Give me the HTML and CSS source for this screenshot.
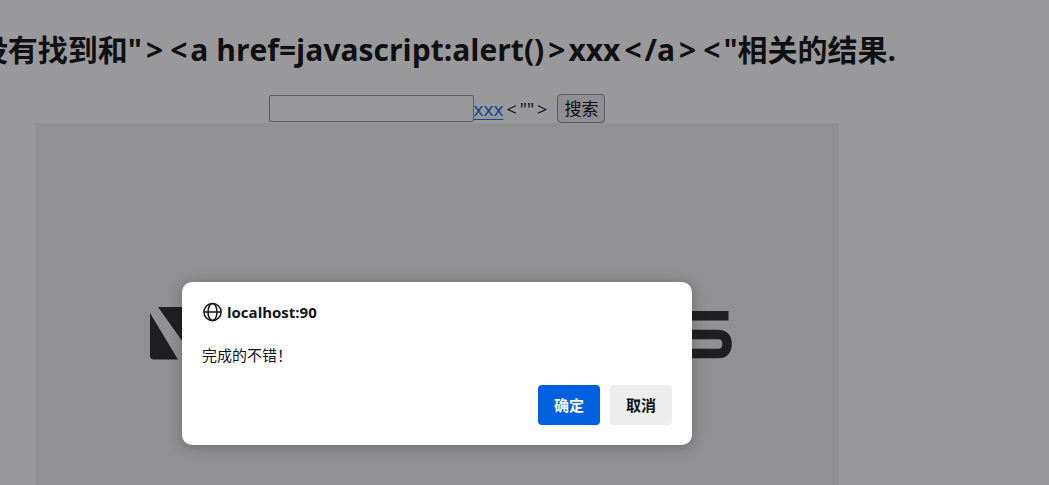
FILE: index.html
```html
<!DOCTYPE html>
<html lang="zh-CN">
<head>
<meta charset="utf-8">
<title>localhost:90</title>
<link rel="stylesheet" href="styles.css">
</head>
<body>
<main class="page">
  <h1 class="title">没有找到和"<span class="angle">&gt;</span><span class="angle">&lt;</span>a href=javascript:alert()<span class="angle">&gt;</span>xxx<span class="angle">&lt;</span>/a<span class="angle">&gt;</span><span class="angle">&lt;</span>"相关的结果.</h1>
  <form class="search">
    <input class="keyword" type="text" aria-label="关键词"><a class="link" href="#">xxx</a><span class="rest"><span class="angle">&lt;</span>""<span class="angle">&gt;</span></span>
    <button class="submit" type="button">搜索</button>
  </form>
  <div class="banner">
    <svg class="logo" viewBox="0 0 584 56" width="584" height="56" aria-hidden="true">
      <path d="M8 2H60V54H45Z M0 8L28 54.500H4Q0 54.500 0 50.500Z"/>
      <path d="M520 6H578.500V15.500H520Z"/>
      <path class="stroke" d="M520 29.500H568Q577 29.500 577 39T568 48.500H520"/>
    </svg>
  </div>
  <div class="dialog" role="dialog" aria-labelledby="origin">
    <div class="origin">
      <svg class="globe" viewBox="0 0 20 20" width="20" height="20" aria-hidden="true">
        <circle cx="10.500" cy="10" r="8.600"/>
        <ellipse cx="10.500" cy="10" rx="4.500" ry="8.600"/>
        <path d="M2 10H19"/>
      </svg>
      <strong id="origin">localhost:90</strong>
    </div>
    <p class="message">完成的不错！</p>
    <div class="actions">
      <button class="action primary" type="button">确定</button>
      <button class="action" type="button">取消</button>
    </div>
  </div>
</main>
</body>
</html>
```
FILE: styles.css
```css
* {
  box-sizing: border-box;
}

body {
  margin: 0;
  min-height: 100vh;
  overflow: hidden;
  background: #99999b;
  color: #101013;
  font-family: "Open Sans", "Noto Sans CJK SC", sans-serif;
}

.page {
  position: relative;
  display: flex;
  flex-direction: column;
  align-items: center;
  min-height: 100vh;
  margin-right: 175px;
  padding-top: 30px;
}

.title {
  margin: 0 0 24px;
  font-size: 30px;
  line-height: 40px;
  white-space: nowrap;
}

.title .angle {
  padding: 0 3px 0 4px;
}

.search {
  display: flex;
  align-items: center;
  height: 29px;
  font-size: 18px;
  line-height: 28px;
}

.keyword {
  width: 205px;
  height: 27px;
  padding: 2px;
  border: 1px solid #5b5a66;
  border-radius: 2px;
  background: #99999b;
  font: inherit;
}

.link {
  color: #0b488c;
  font-size: 19px;
  text-underline-offset: 3px;
}

.rest {
  margin-right: 7px;
}

.rest .angle {
  padding: 0 3px;
}

.submit {
  height: 29px;
  padding: 0 6px;
  border: 1px solid #5b5a66;
  border-radius: 4px;
  background: #8e8e93;
  color: inherit;
  font: inherit;
  font-size: 17px;
}

.banner {
  display: flex;
  flex: 1;
  justify-content: center;
  align-self: stretch;
  margin: 0 35px;
  padding-top: 182px;
  background: #919193;
}

.logo {
  flex: none;
  margin-left: 10px;
  fill: #1f1f21;
}

.logo .stroke {
  fill: none;
  stroke: #1f1f21;
  stroke-width: 9.5px;
}

.dialog {
  position: absolute;
  top: 282px;
  left: 50%;
  width: 510px;
  padding: 20px;
  border-radius: 10px;
  background: #fff;
  box-shadow: 0 2px 14px rgba(20, 20, 26, 0.3);
  color: #15141a;
  font-size: 15px;
  line-height: 20px;
  transform: translateX(-50%);
}

.origin {
  display: flex;
  align-items: center;
  gap: 5px;
}

.globe {
  fill: none;
  stroke: #15141a;
  stroke-width: 1.5px;
}

.message {
  margin: 23px 0 20px;
}

.actions {
  display: flex;
  justify-content: flex-end;
  gap: 10px;
}

.action {
  width: 62px;
  height: 40px;
  padding: 0;
  border: 0;
  border-radius: 4px;
  background: #ededed;
  color: #15141a;
  font: inherit;
  font-weight: 700;
}

.primary {
  background: #0061e0;
  color: #fbfbfe;
}
```
